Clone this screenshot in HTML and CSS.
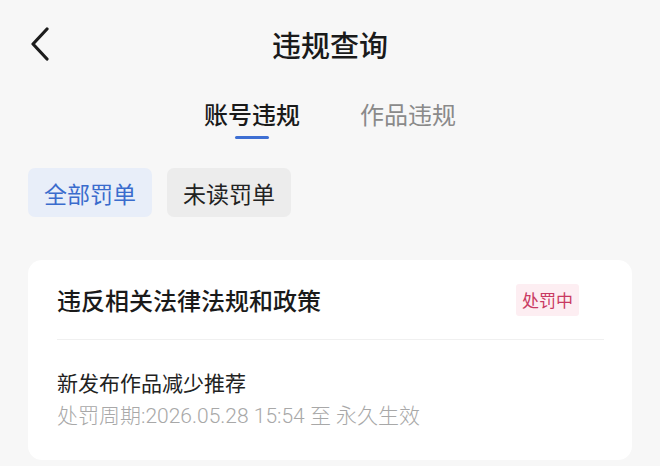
FILE: index.html
```html
<!DOCTYPE html>
<html lang="zh-CN">
<head>
<meta charset="utf-8">
<link rel="stylesheet" href="styles.css">
</head>
<body>
<header class="topbar">
  <div class="back">
    <svg width="20" height="34" viewBox="0 0 20 34"><path d="M17 2 L3 17 L17 32" fill="none" stroke="#1c1c1c" stroke-width="3.2" stroke-linecap="round" stroke-linejoin="round"/></svg>
  </div>
  <h1 class="title">违规查询</h1>
  <div></div>
</header>
<nav class="tabs">
  <div class="tab active"><span>账号违规</span><i class="bar"></i></div>
  <div class="tab"><span>作品违规</span></div>
</nav>
<div class="filters">
  <button class="chip on">全部罚单</button>
  <button class="chip">未读罚单</button>
</div>
<section class="card">
  <div class="card-head">
    <div class="card-title">违反相关法律法规和政策</div>
    <span class="badge">处罚中</span>
  </div>
  <div class="card-body">
    <div class="measure">新发布作品减少推荐</div>
    <div class="period">处罚周期:2026.05.28 15:54 至 永久生效</div>
  </div>
</section>
</body>
</html>
```
FILE: styles.css
```css
* { box-sizing: border-box; }
html, body { margin: 0; padding: 0; }
body {
  width: 660px;
  height: 466px;
  overflow: hidden;
  background: #f7f7f7;
  font-family: "Noto Sans CJK SC", "Noto Sans", sans-serif;
  color: #1c1c1c;
}
.topbar {
  height: 87px;
  display: grid;
  grid-template-columns: 1fr auto 1fr;
  align-items: center;
}
.back { padding-left: 30px; display: flex; align-items: center; }
.back svg { display: block; }
.title {
  margin: 0;
  font-size: 29px;
  font-weight: 500;
  line-height: 36px;
  color: #1a1a1a;
}
.tabs {
  display: flex;
  justify-content: center;
  gap: 60px;
  padding-top: 11px;
}
.tab {
  display: flex;
  flex-direction: column;
  align-items: center;
  font-size: 24px;
  line-height: 32px;
  color: #8a8a8a;
}
.tab.active { color: #1a1a1a; font-weight: 500; }
.bar {
  display: block;
  width: 34px;
  height: 3px;
  border-radius: 2px;
  background: #3e6fd3;
  margin-top: 6px;
}
.tab:not(.active)::after { content: ""; display: block; height: 9px; }
.filters {
  display: flex;
  gap: 15px;
  padding-left: 28px;
  margin-top: 29px;
}
.chip {
  width: 124px;
  height: 49px;
  border: 0;
  border-radius: 7px;
  background: #ececec;
  color: #222;
  font-family: inherit;
  font-size: 23px;
  padding: 0;
}
.chip.on { background: #e8eef9; color: #3a6ccd; }
.card {
  margin: 43px 28px 0 28px;
  background: #fff;
  border-radius: 14px;
  padding: 0 28px 0 29px;
  height: 200px;
}
.card-head {
  height: 80px;
  display: flex;
  align-items: center;
  justify-content: space-between;
  border-bottom: 1px solid #f0f0f0;
}
.card-title {
  font-size: 24px;
  font-weight: 500;
  color: #1a1a1a;
}
.badge {
  margin-right: 25px;
  background: #fdeef2;
  color: #c93a62;
  font-size: 17px;
  line-height: 32px;
  padding: 0 6px;
  border-radius: 3px;
}
.card-body { padding-top: 28px; }
.measure { font-size: 21px; line-height: 28px; color: #222; }
.period {
  font-family: Roboto, "Noto Sans CJK SC", sans-serif;
  font-weight: 300;
  font-size: 21px;
  line-height: 28px;
  margin-top: 6px;
  color: #a8a8a8;
}
```
